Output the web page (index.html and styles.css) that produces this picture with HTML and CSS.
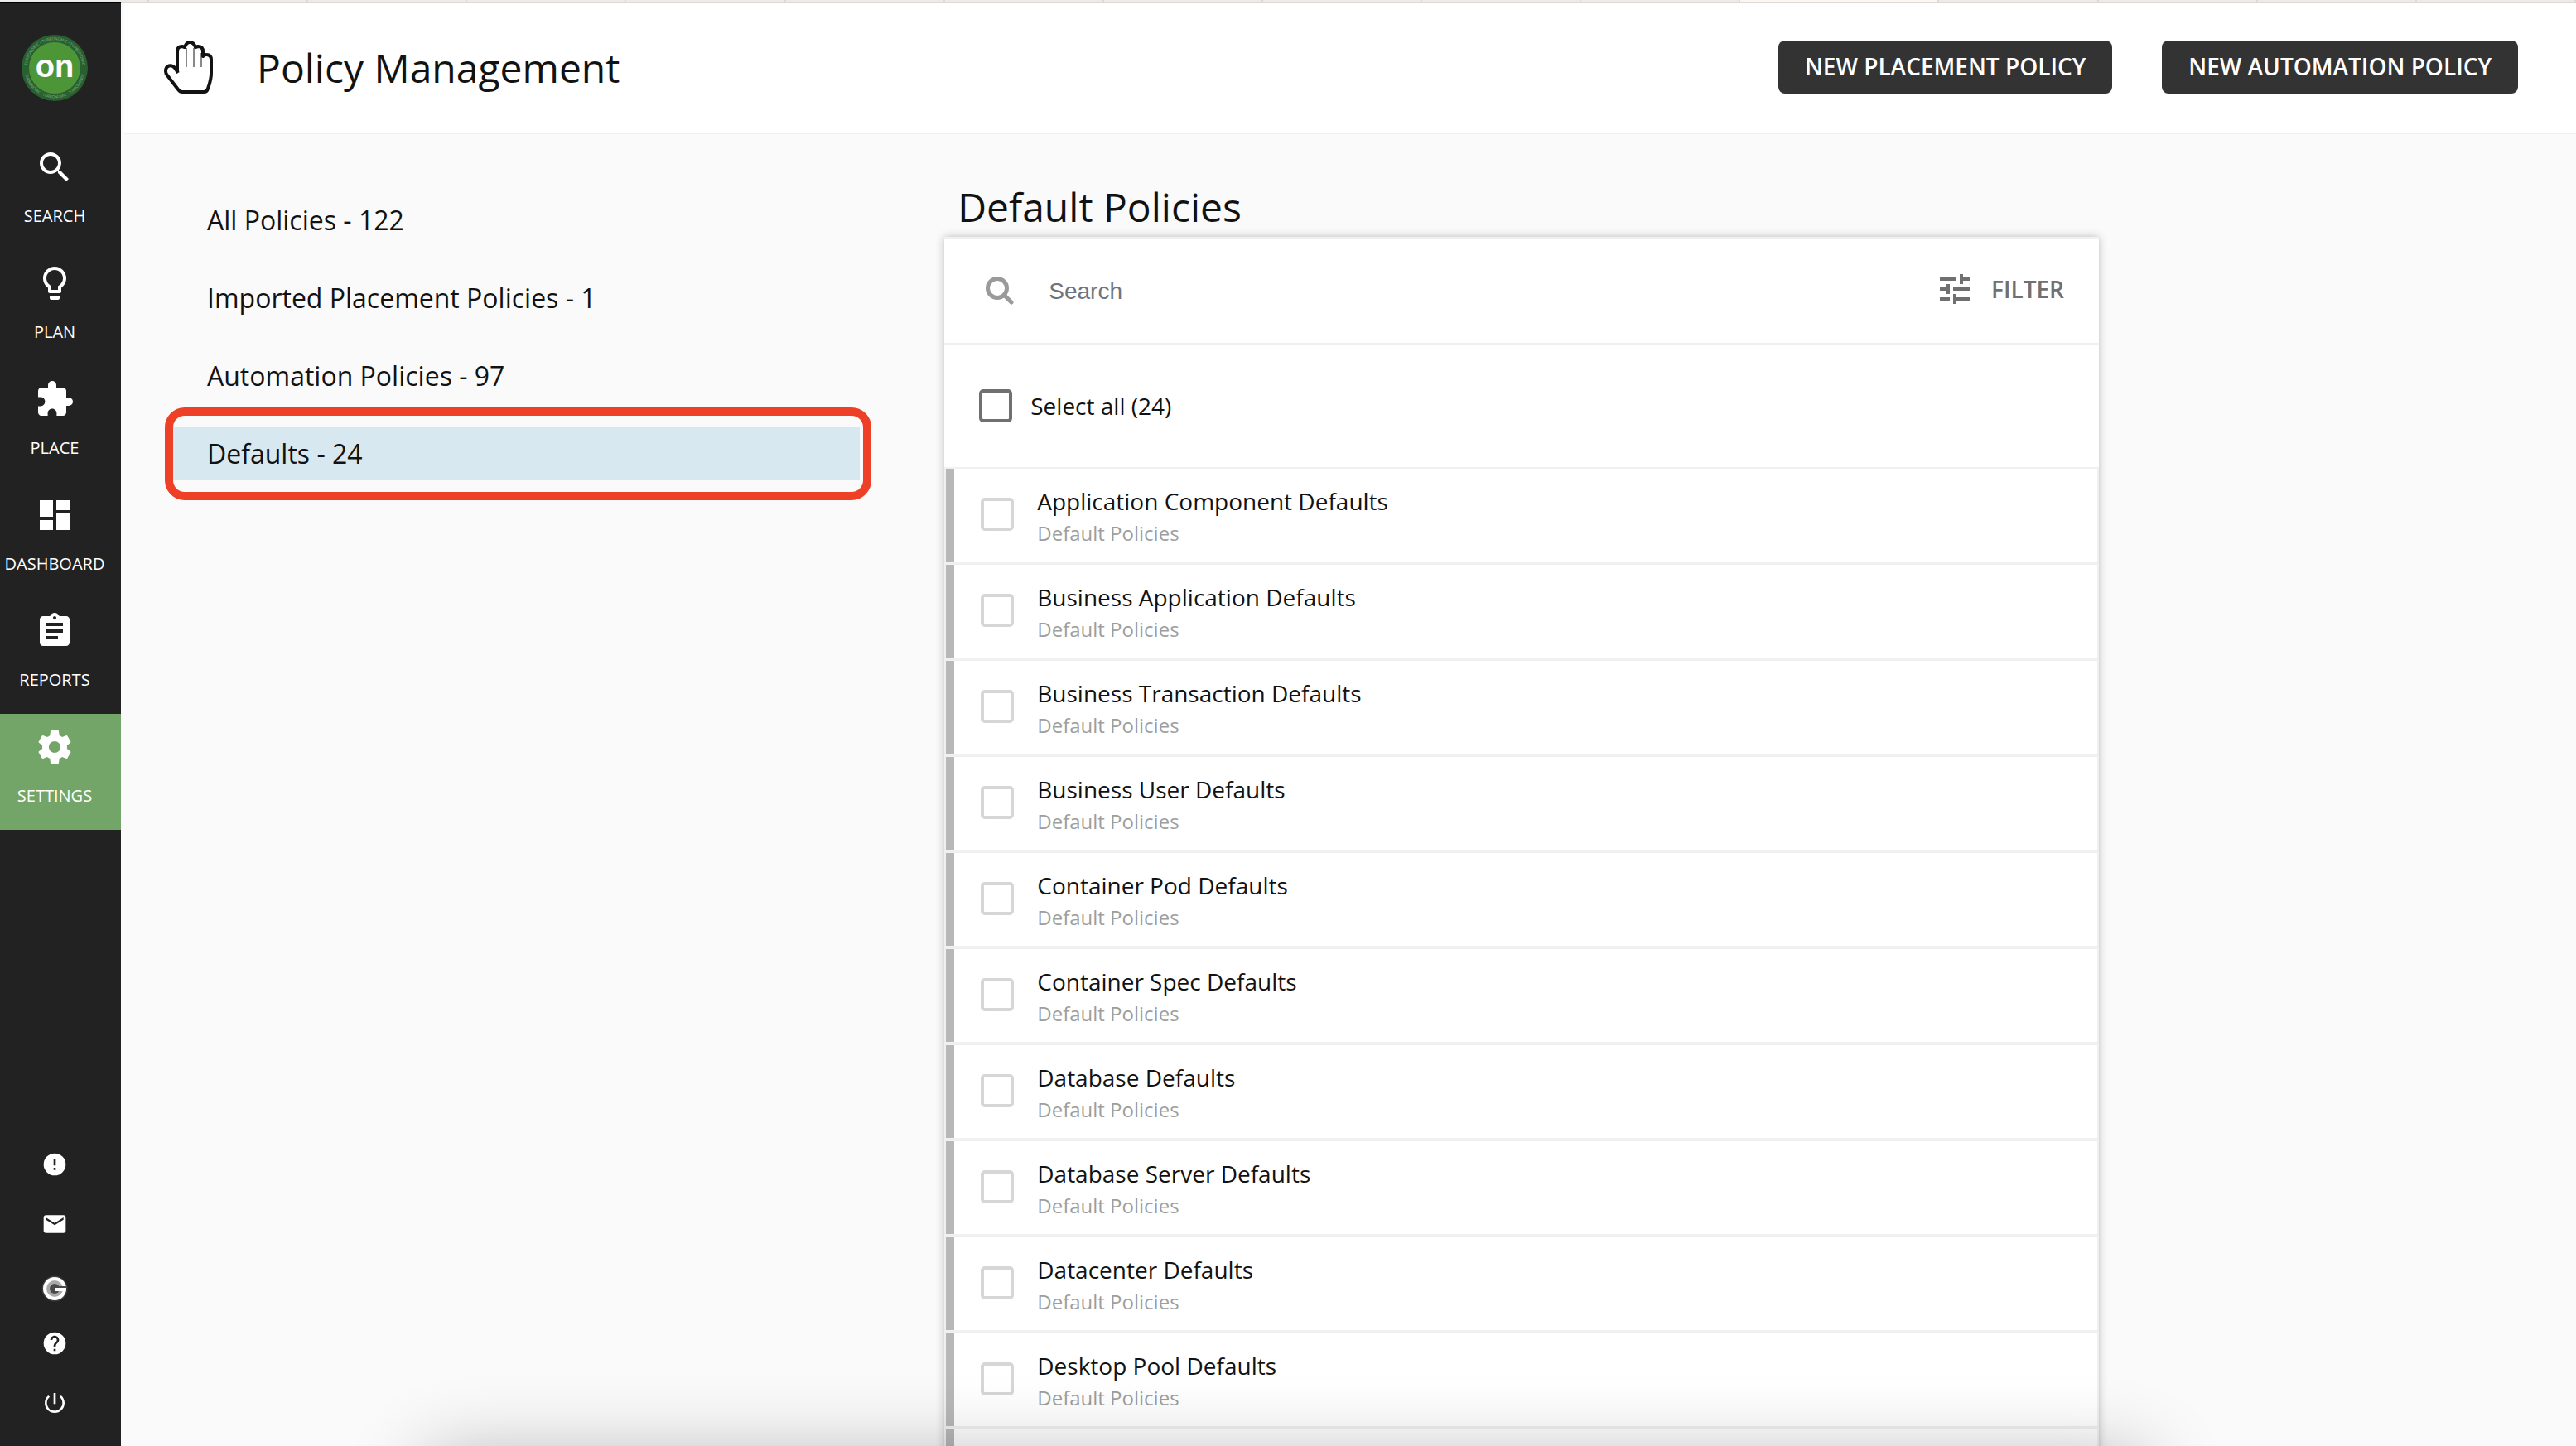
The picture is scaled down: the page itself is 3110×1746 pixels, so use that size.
FILE: index.html
```html
<!DOCTYPE html>
<html lang="en">
<head>
<meta charset="utf-8">
<title>Policy Management</title>
<link rel="stylesheet" href="styles.css">
</head>
<body>
<div class="tab-strip">
  <span class="tab tab-first"></span><span class="tab"></span><span class="tab"></span><span class="tab"></span><span class="tab"></span><span class="tab"></span><span class="tab"></span><span class="tab"></span><span class="tab"></span><span class="tab"></span><span class="tab"></span><span class="tab tab-active"></span><span class="tab"></span><span class="tab"></span><span class="tab"></span><span class="tab"></span>
</div>
<div class="app">
  <aside class="sidebar">
    <a class="logo" href="#">
      <svg viewBox="0 0 160 160" width="80" height="80">
        <defs>
          <path id="ring-top" d="M13 80a67 67 0 0 1 134 0"/>
          <path id="ring-bottom" d="M7 80a73 73 0 0 0 146 0"/>
        </defs>
        <circle cx="80" cy="80" r="80" fill="#28602f"/>
        <circle cx="80" cy="80" r="62" fill="#4d9638"/>
        <text class="ring-text"><textPath href="#ring-top" startOffset="50%" text-anchor="middle">TURBONOMIC • TURBONOMIC • TURBONOMIC</textPath></text>
        <text class="ring-text"><textPath href="#ring-bottom" startOffset="50%" text-anchor="middle">TURBONOMIC • TURBONOMIC • TURBONOMIC</textPath></text>
        <text class="logo-text" x="80" y="102" text-anchor="middle">on</text>
      </svg>
    </a>
    <nav class="menu">
      <a class="menu-item" href="#"><svg viewBox="0 0 24 24"><path d="M15.5 14h-.79l-.28-.27A6.47 6.47 0 0 0 16 9.5 6.5 6.5 0 1 0 9.5 16c1.61 0 3.09-.59 4.23-1.57l.27.28v.79l5 4.99L20.49 19l-4.99-5zm-6 0C7.01 14 5 11.99 5 9.5S7.01 5 9.5 5 14 7.01 14 9.5 11.99 14 9.5 14z"/></svg><span>SEARCH</span></a>
      <a class="menu-item" href="#"><svg viewBox="0 0 24 24"><path d="M9 21c0 .55.45 1 1 1h4c.55 0 1-.45 1-1v-1H9v1zm3-19C8.14 2 5 5.14 5 9c0 2.38 1.19 4.47 3 5.74V17c0 .55.45 1 1 1h6c.55 0 1-.45 1-1v-2.26c1.81-1.27 3-3.36 3-5.74 0-3.86-3.14-7-7-7zm2.85 11.1l-.85.6V16h-4v-2.3l-.85-.6A4.997 4.997 0 0 1 7 9c0-2.76 2.24-5 5-5s5 2.24 5 5c0 1.63-.8 3.16-2.15 4.1z"/></svg><span>PLAN</span></a>
      <a class="menu-item" href="#"><svg viewBox="0 0 24 24"><path d="M20.5 11H19V7c0-1.1-.9-2-2-2h-4V3.5a2.5 2.5 0 0 0-5 0V5H4c-1.1 0-1.99.9-1.99 2v3.8H3.500c1.490 0 2.700 1.210 2.700 2.700s-1.210 2.700-2.700 2.700H2V20c0 1.100.9 2 2 2h3.800v-1.500c0-1.490 1.210-2.700 2.700-2.700s2.700 1.210 2.700 2.700V22H17c1.100 0 2-.9 2-2v-4h1.500a2.500 2.500 0 0 0 0-5z"/></svg><span>PLACE</span></a>
      <a class="menu-item" href="#"><svg viewBox="0 0 24 24"><path d="M3 13h8V3H3v10zm0 8h8v-6H3v6zm10 0h8V11h-8v10zm0-18v6h8V3h-8z"/></svg><span>DASHBOARD</span></a>
      <a class="menu-item" href="#"><svg viewBox="0 0 24 24"><path d="M19 3h-4.180C14.400 1.840 13.300 1 12 1s-2.400.84-2.820 2H5c-1.100 0-2 .9-2 2v14c0 1.100.9 2 2 2h14c1.100 0 2-.9 2-2V5c0-1.100-.9-2-2-2zm-7 0c.55 0 1 .45 1 1s-.45 1-1 1-1-.45-1-1 .45-1 1-1zm2 14H7v-2h7v2zm3-4H7v-2h10v2zm0-4H7V7h10v2z"/></svg><span>REPORTS</span></a>
      <a class="menu-item menu-item-active" href="#"><svg viewBox="0 0 24 24"><path d="M19.430 12.980c.04-.32.070-.64.070-.98s-.03-.66-.07-.98l2.110-1.650c.19-.15.240-.42.120-.64l-2-3.460c-.12-.22-.39-.3-.61-.22l-2.490 1c-.52-.4-1.080-.73-1.690-.98l-.38-2.650C14.460 2.180 14.250 2 14 2h-4c-.25 0-.46.180-.49.420l-.38 2.650c-.61.250-1.170.590-1.690.980l-2.490-1c-.23-.09-.49 0-.61.220l-2 3.460c-.13.220-.07.490.120.640l2.110 1.650c-.04.320-.07.650-.07.980s.03.660.070.980l-2.110 1.650c-.19.150-.24.420-.12.640l2 3.460c.12.220.39.300.61.220l2.490-1c.52.400 1.080.730 1.690.980l.38 2.650c.03.240.24.420.49.420h4c.25 0 .46-.18.490-.42l.38-2.650c.61-.25 1.170-.59 1.690-.98l2.490 1c.23.090.49 0 .61-.22l2-3.460c.12-.22.070-.49-.12-.64l-2.110-1.650zM12 15.500c-1.930 0-3.500-1.570-3.500-3.500s1.570-3.500 3.500-3.500 3.500 1.570 3.500 3.500-1.570 3.500-3.500 3.500z"/></svg><span>SETTINGS</span></a>
    </nav>
    <nav class="tools">
      <a class="tool" href="#" aria-label="Alerts"><svg viewBox="0 0 24 24"><path d="M12 2a10 10 0 1 0 0 20 10 10 0 0 0 0-20zm1 15h-2v-2h2v2zm0-4h-2V7h2v6z"/></svg></a>
      <a class="tool" href="#" aria-label="Mail"><svg viewBox="0 0 24 24"><path d="M20 4H4c-1.100 0-1.990.9-1.990 2L2 18c0 1.100.9 2 2 2h16c1.100 0 2-.9 2-2V6c0-1.100-.9-2-2-2zm0 4l-8 5-8-5V6l8 5 8-5v2z"/></svg></a>
      <a class="tool" href="#" aria-label="Green Circle"><svg class="tool-tall" viewBox="0 0 32 44">
        <circle cx="16" cy="28" r="15.500" fill="#3c3c3c"/><circle cx="16" cy="28" r="14" fill="#fff"/><circle cx="16" cy="28" r="10" fill="#aaa"/><circle cx="16" cy="28" r="6" fill="#4a4a4a"/>
        <path d="M16 25h15v2H16z" fill="#4a4a4a"/><path d="M16 27h14l-1 4H16z" fill="#fff"/></svg></a>
      <a class="tool" href="#" aria-label="Help"><svg viewBox="0 0 24 24"><path d="M12 2a10 10 0 1 0 0 20 10 10 0 0 0 0-20zm1 17h-2v-2h2v2zm2.070-7.750l-.9.920C13.450 12.900 13 13.500 13 15h-2v-.5c0-1.100.45-2.100 1.170-2.830l1.240-1.260c.37-.36.590-.86.590-1.410 0-1.100-.9-2-2-2s-2 .9-2 2H8c0-2.210 1.790-4 4-4s4 1.790 4 4c0 .88-.36 1.680-.93 2.250z"/></svg></a>
      <a class="tool" href="#" aria-label="Log out"><svg viewBox="0 0 24 24"><path d="M13 3h-2v10h2V3zm4.830 2.170l-1.420 1.420A6.920 6.920 0 0 1 19 12c0 3.870-3.130 7-7 7A6.995 6.995 0 0 1 7.580 6.580L6.170 5.170A8.932 8.932 0 0 0 3 12a9 9 0 0 0 18 0c0-2.740-1.230-5.180-3.170-6.830z"/></svg></a>
    </nav>
  </aside>
  <main class="main">
    <header class="header">
      <svg class="hand" viewBox="0 0 60 66" fill="none" stroke="#121212">
        <path stroke-width="1" d="M27 10v23M36 10v23M45 16v17"/>
        <path stroke-width="4" stroke-linejoin="round" d="M17 40L13 34C9 29 2 31 2 38C2 40 3 42 4 43L17 60Q19 63 22 63H48Q52 63 53 59Q57 48 57 40V24Q57 18 51 18Q48 18 47 20V14Q47 8 41 8L38 9Q36 3 31 3Q27 3 25 9L22 8Q16 8 16 14V38"/>
      </svg>
      <h1 class="title">Policy Management</h1>
      <button class="action" type="button">NEW PLACEMENT POLICY</button>
      <button class="action" type="button">NEW AUTOMATION POLICY</button>
    </header>
    <div class="content">
      <nav class="groups">
        <a class="group" href="#">All Policies - 122</a>
        <a class="group" href="#">Imported Placement Policies - 1</a>
        <a class="group" href="#">Automation Policies - 97</a>
        <a class="group group-active" href="#">Defaults - 24</a>
      </nav>
      <section class="policies">
        <h2 class="subtitle">Default Policies</h2>
        <div class="card">
          <div class="search-row">
            <svg class="search-icon" viewBox="0 0 34 34" fill="none" stroke="#9a9a9a"><circle cx="14" cy="14" r="11.500" stroke-width="5"/><path d="M23 23l8 8" stroke-width="5" stroke-linecap="round"/></svg>
            <input class="search" type="text" placeholder="Search" aria-label="Search">
            <button class="filter" type="button"><svg viewBox="0 0 24 24"><path d="M3 17v2h6v-2H3zM3 5v2h10V5H3zm10 16v-2h8v-2h-8v-2h-2v6h2zM7 9v2H3v2h4v2h2V9H7zm14 4v-2H11v2h10zm-6-4h2V7h4V5h-4V3h-2v6z"/></svg>FILTER</button>
          </div>
          <label class="select-all"><input class="check check-dark" type="checkbox">Select all (24)</label>
          <ul class="rows">
            <li class="row"><label class="policy"><input class="check" type="checkbox"><span><span class="name">Application Component Defaults</span><span class="kind">Default Policies</span></span></label></li>
            <li class="row"><label class="policy"><input class="check" type="checkbox"><span><span class="name">Business Application Defaults</span><span class="kind">Default Policies</span></span></label></li>
            <li class="row"><label class="policy"><input class="check" type="checkbox"><span><span class="name">Business Transaction Defaults</span><span class="kind">Default Policies</span></span></label></li>
            <li class="row"><label class="policy"><input class="check" type="checkbox"><span><span class="name">Business User Defaults</span><span class="kind">Default Policies</span></span></label></li>
            <li class="row"><label class="policy"><input class="check" type="checkbox"><span><span class="name">Container Pod Defaults</span><span class="kind">Default Policies</span></span></label></li>
            <li class="row"><label class="policy"><input class="check" type="checkbox"><span><span class="name">Container Spec Defaults</span><span class="kind">Default Policies</span></span></label></li>
            <li class="row"><label class="policy"><input class="check" type="checkbox"><span><span class="name">Database Defaults</span><span class="kind">Default Policies</span></span></label></li>
            <li class="row"><label class="policy"><input class="check" type="checkbox"><span><span class="name">Database Server Defaults</span><span class="kind">Default Policies</span></span></label></li>
            <li class="row"><label class="policy"><input class="check" type="checkbox"><span><span class="name">Datacenter Defaults</span><span class="kind">Default Policies</span></span></label></li>
            <li class="row"><label class="policy"><input class="check" type="checkbox"><span><span class="name">Desktop Pool Defaults</span><span class="kind">Default Policies</span></span></label></li>
            <li class="row"></li>
          </ul>
        </div>
      </section>
    </div>
  </main>
</div>
<div class="dock-shadow"></div>
</body>
</html>
```
FILE: styles.css
```css
* {
  box-sizing: border-box;
}

body {
  margin: 0;
  height: 100vh;
  display: flex;
  flex-direction: column;
  overflow: hidden;
  background: #fafafa;
  color: #121212;
  font-family: "Open Sans", "Noto Sans", sans-serif;
  font-size: 28px;
}

a {
  color: inherit;
  text-decoration: none;
}

button {
  font: inherit;
  border: 0;
  cursor: pointer;
}

/* Edge of the browser's tab bar */
.tab-strip {
  display: flex;
  flex: none;
  height: 2px;
  background: #eeeae7;
}

.tab {
  flex: 1;
  border-right: 2px solid #dcd9d6;
}

.tab-first {
  flex: 0 0 180px;
}

.tab-active {
  flex: 0 0 240px;
  background: #fbf6f2;
}

.app {
  display: flex;
  flex: 1;
  min-height: 0;
}

/* Sidebar */
.sidebar {
  flex: none;
  width: 146px;
  padding: 38px 0 16px;
  display: flex;
  flex-direction: column;
  border-top: 2px solid #000;
  background: #222;
  color: #fff;
}

.logo {
  display: flex;
  margin: 0 0 40px 26px;
}

.logo-text {
  fill: #fff;
  font-family: "Liberation Sans Narrow", "Liberation Sans", Arial, sans-serif;
  font-size: 76px;
  font-weight: 700;
}

.ring-text {
  fill: #8fb58f;
  font-size: 9px;
}

.menu-item {
  display: flex;
  flex-direction: column;
  align-items: center;
  gap: 21px;
  padding: 16px 14px 27px 0;
  font-size: 20px;
  line-height: 28px;
}

.menu-item-active {
  background: #74a568;
}

.menu-item svg {
  width: 48px;
  height: 48px;
  fill: currentColor;
}

.tools {
  margin-top: auto;
}

.tool {
  display: flex;
  align-items: center;
  justify-content: center;
  height: 72px;
  padding-right: 14px;
}

.tool svg {
  width: 32px;
  height: 32px;
  fill: currentColor;
}

.tool .tool-tall {
  height: 44px;
}

/* Header */
.main {
  flex: 1;
  min-width: 0;
  display: flex;
  flex-direction: column;
  padding-left: 4px;
  border-top: 2px solid #dcdad9;
}

.header {
  flex: none;
  display: flex;
  align-items: center;
  height: 158px;
  padding: 0 70px 2px 48px;
  border-bottom: 2px solid #f0f0f0;
  background: #fff;
}

.hand {
  width: 60px;
  height: 66px;
}

.title {
  flex: 1;
  margin: 2px 0 0 52px;
  font-size: 48px;
  font-weight: 400;
  line-height: 64px;
}

.action {
  height: 64px;
  margin-left: 60px;
  padding: 0 32px 2px;
  border-radius: 8px;
  background: #333;
  color: #fff;
  font-weight: 600;
}

/* Content */
.content {
  flex: 1;
  min-height: 0;
  display: grid;
  grid-template-columns: 3fr 5fr;
  gap: 102px;
  max-width: 2400px;
  padding: 0 16px 0 52px;
  overflow: hidden;
}

.groups {
  display: flex;
  flex-direction: column;
  gap: 30px;
  padding-top: 72px;
}

.group {
  padding-left: 48px;
  font-size: 32px;
  line-height: 64px;
}

.group-active {
  position: relative;
  background: #d8e8f0;
}

.group-active::after {
  content: "";
  position: absolute;
  inset: -24px -14px -24px -3px;
  border: 10px solid #ed4027;
  border-radius: 24px;
}

.policies {
  min-height: 0;
  padding-top: 56px;
}

.subtitle {
  margin: 0 0 4px;
  padding-left: 16px;
  font-size: 48px;
  font-weight: 400;
  line-height: 64px;
}

.card {
  background: #fff;
  box-shadow: 0 0 10px rgba(0, 0, 0, 0.25);
}

.search-row {
  display: flex;
  align-items: center;
  height: 130px;
  padding: 0 42px 0 50px;
  border-top: 2px solid #f0f0f0;
  border-bottom: 2px solid #f0f0f0;
}

.search-icon {
  flex: none;
  width: 34px;
  height: 34px;
}

.search {
  flex: 1;
  min-width: 0;
  margin-left: 42px;
  padding: 2px 0 0;
  border: 0;
  outline: 0;
  background: none;
  font-family: "Liberation Sans", Arial, sans-serif;
  font-size: 28px;
}

.search::placeholder {
  color: #6c757d;
}

.filter {
  display: flex;
  align-items: center;
  gap: 20px;
  padding: 0 0 4px;
  background: none;
  color: #707070;
  font-weight: 600;
}

.filter svg {
  width: 48px;
  height: 48px;
  fill: currentColor;
}

.select-all {
  display: flex;
  align-items: center;
  gap: 22px;
  height: 148px;
  padding-left: 42px;
}

.check {
  appearance: none;
  flex: none;
  width: 40px;
  height: 40px;
  margin: 0;
  border: 4px solid #d6d6d6;
  border-radius: 5px;
}

.check-dark {
  border-color: #707070;
}

.rows {
  margin: 0;
  padding: 0;
  list-style: none;
}

.row {
  height: 116px;
  border: 2px solid #f0f0f0;
}

.row::before {
  content: "";
  float: left;
  width: 10px;
  height: 100%;
  background: #b8b8b8;
}

.policy {
  display: flex;
  align-items: center;
  gap: 28px;
  height: 110px;
  padding-left: 32px;
}

.name,
.kind {
  display: block;
}

.name {
  padding-top: 8px;
  line-height: 38px;
}

.kind {
  color: #9e9e9e;
  font-size: 24px;
  line-height: 40px;
}

/* Shade cast upward from below the window's lower edge */
.dock-shadow {
  position: fixed;
  top: 100%;
  left: 515px;
  right: 520px;
  height: 400px;
  box-shadow: 0 18px 90px rgba(0, 0, 0, 0.32);
}
```
